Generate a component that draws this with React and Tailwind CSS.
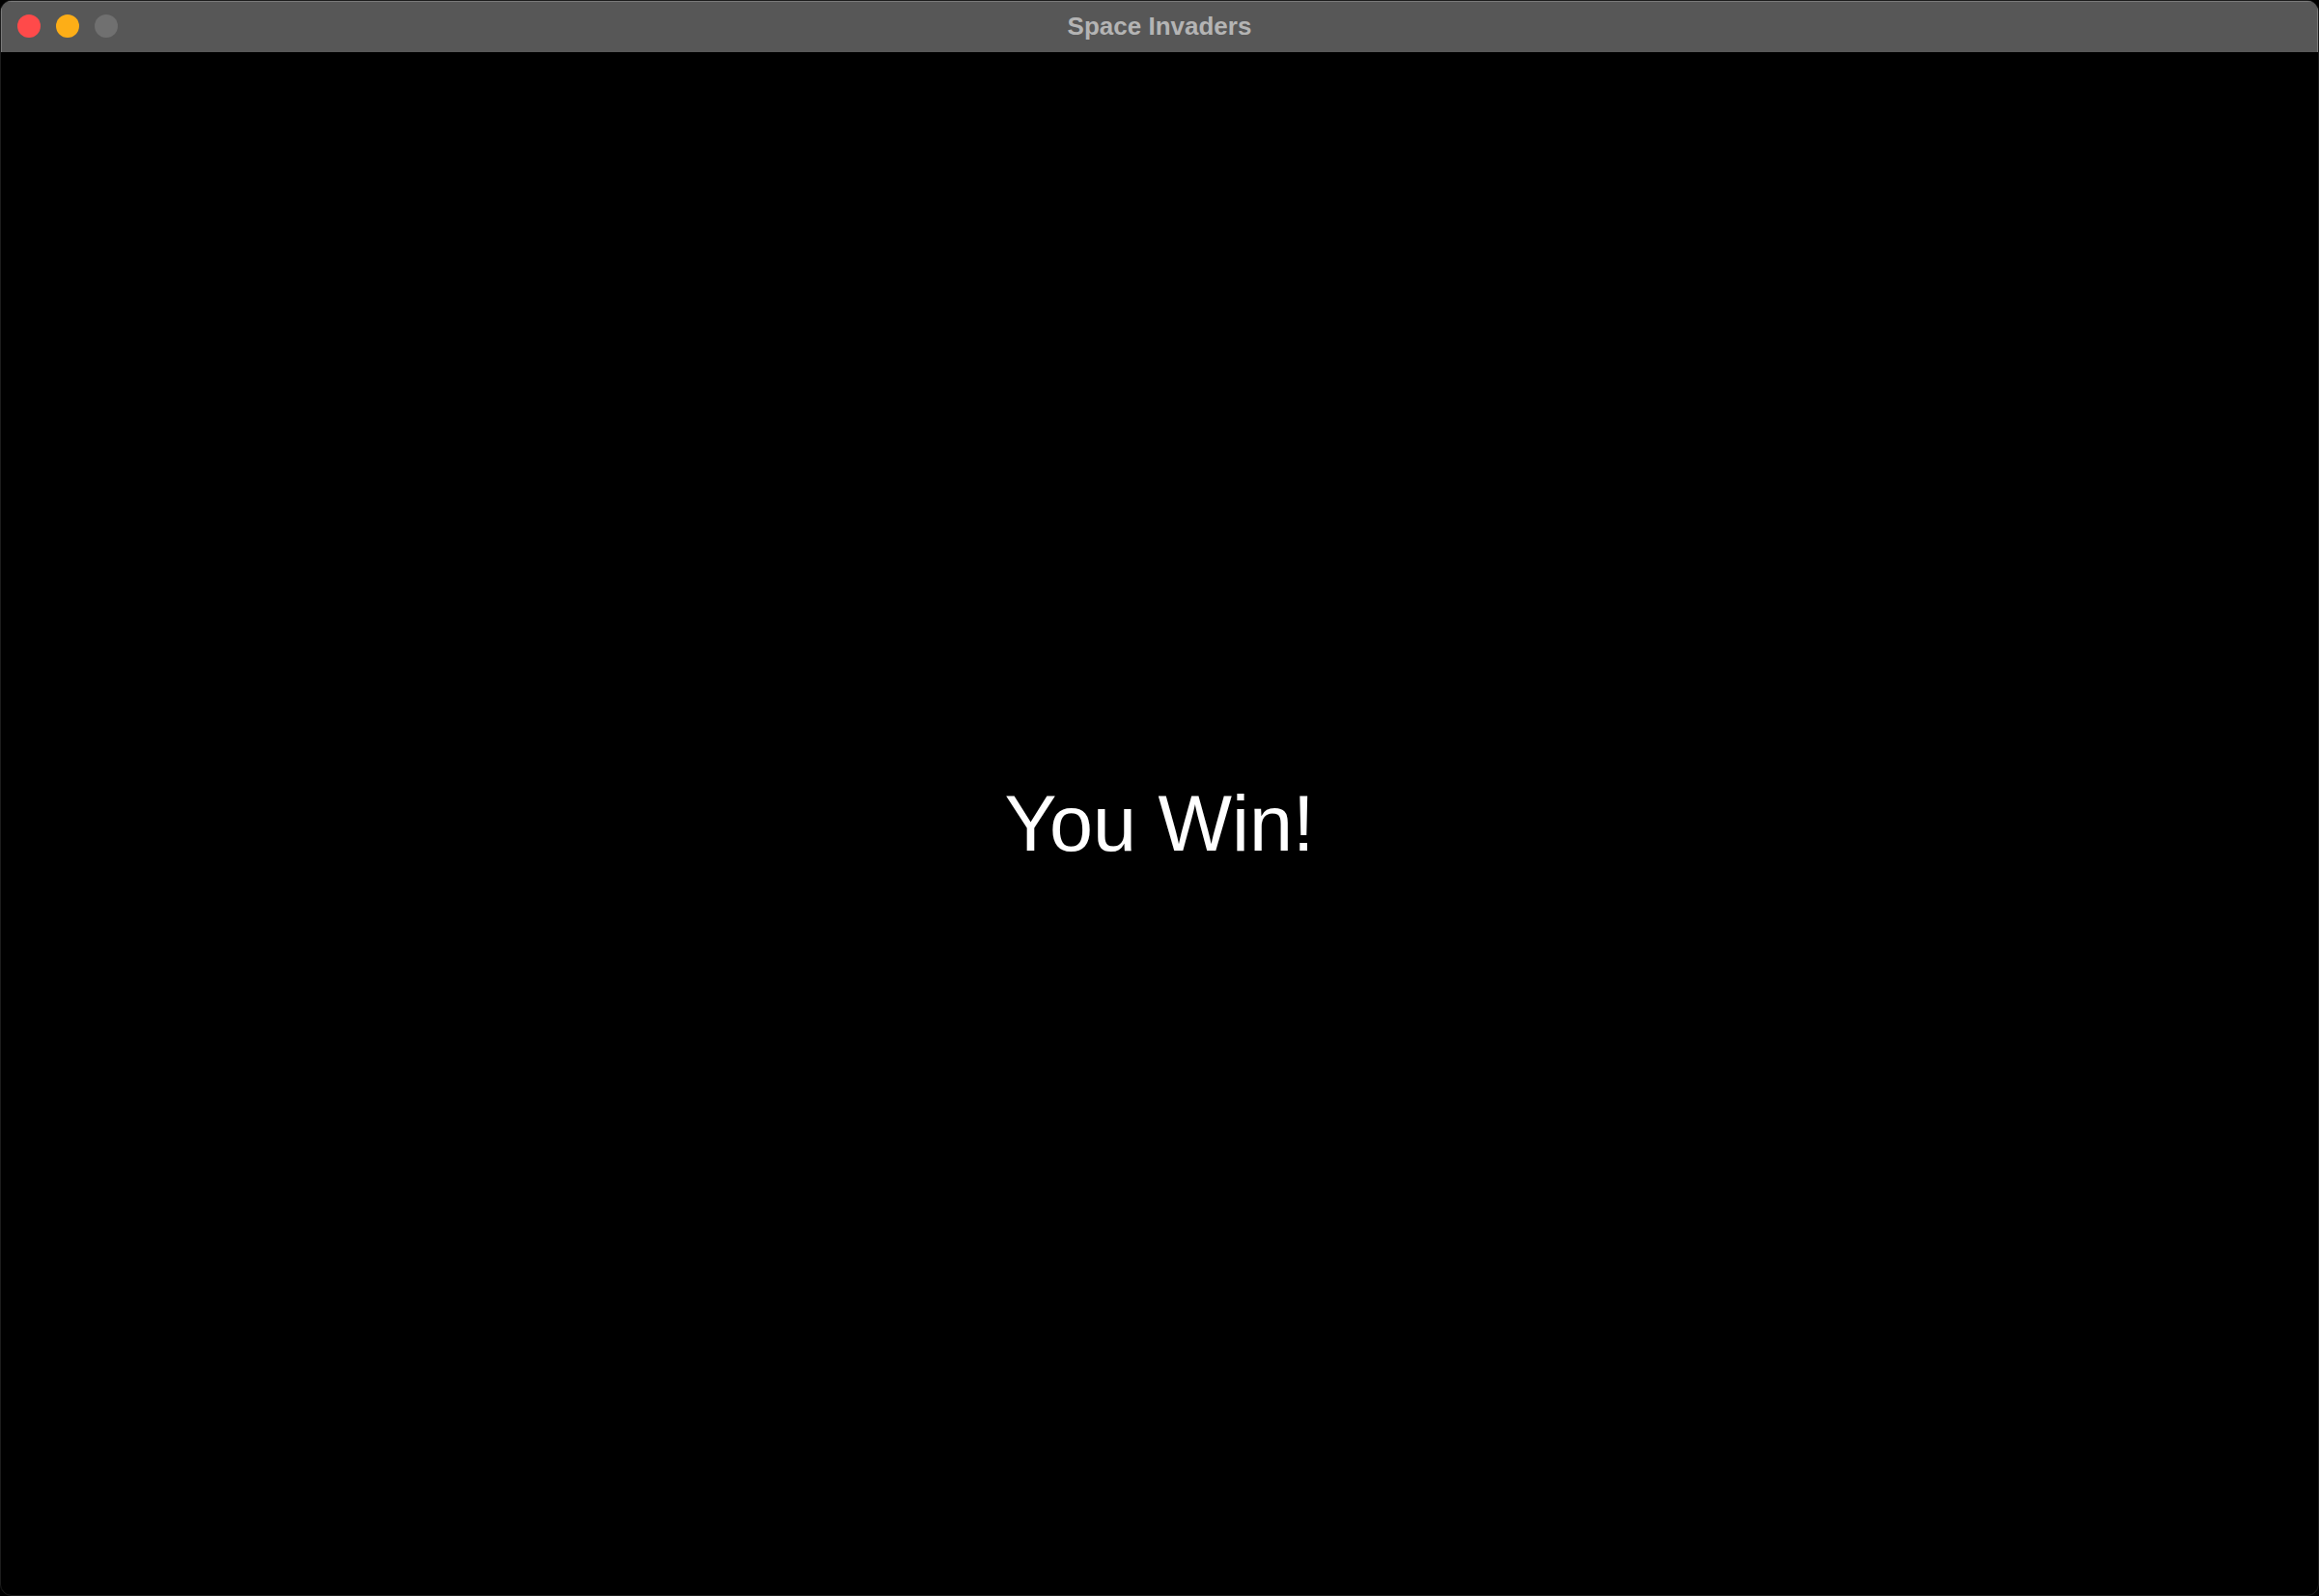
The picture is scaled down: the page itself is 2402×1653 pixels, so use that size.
import React from "react";

const App = () => {
  return (
    <div className="w-[2402px] h-[1653px] bg-black">
      <div className="flex flex-col w-full h-full rounded-[12px] overflow-hidden border border-[#1c1c1c] shadow-[inset_0_0_0_1px_#4a4a4a]">
        {/* Title bar */}
        <div className="relative flex items-center justify-center h-[54px] bg-[#575757] border-b border-black shadow-[inset_1px_1px_0_#7a7a7a,inset_-1px_0_0_#7a7a7a]">
          <div className="absolute left-[17px] top-[14px] flex gap-[16px]">
            <span className="w-[24px] h-[24px] rounded-full bg-[#ff4a4a]" />
            <span className="w-[24px] h-[24px] rounded-full bg-[#fdae17]" />
            <span className="w-[24px] h-[24px] rounded-full bg-[#707070]" />
          </div>
          <span
            className="text-[26px] font-bold text-[#b4b4b4]"
            style={{ fontFamily: '"Liberation Sans", Arial, sans-serif' }}
          >
            Space Invaders
          </span>
        </div>

        {/* Game area */}
        <div className="flex-1 flex items-center justify-center bg-black">
          <span
            className="text-[81px] leading-none text-white"
            style={{ fontFamily: '"Liberation Sans", Arial, sans-serif' }}
          >
            You Win!
          </span>
        </div>
      </div>
    </div>
  );
};

export default App;
